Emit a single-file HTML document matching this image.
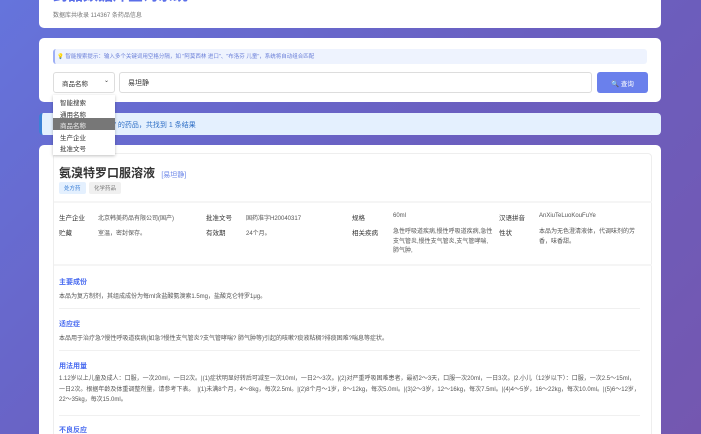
<!DOCTYPE html><html style="width:701px;height:434px;overflow:hidden"><head><meta charset="utf-8"><style>
*{box-sizing:border-box;margin:0;padding:0}
html,body{width:701px;height:434px;overflow:hidden}
body{font-family:"Liberation Sans","Noto Sans CJK SC",sans-serif;background:linear-gradient(135deg,#6574dc 0%,#6a5fc0 50%,#7457b0 100%);position:relative;color:#333}
.card{position:absolute;left:39px;width:622px;background:#fff;border-radius:5px}
.abs{position:absolute;white-space:nowrap}
.s{font-size:6px;color:#555}
.lab{font-size:6.5px;color:#333}
.h{font-size:7px;color:#4a6cf0;font-weight:bold}
.hr{position:absolute;left:59px;width:581px;height:1px;background:#f0f0f0}
</style></head><body>
<div class="card" style="top:-10px;height:38px">
 <div class="abs" style="left:14px;top:0;font-size:15px;font-weight:bold;color:#5a6ee8;line-height:12px">药品数据库查询系统</div>
 <div class="abs s" style="left:14px;top:20px;color:#777">数据库共收录 114367 条药品信息</div>
</div>
<div class="card" style="top:38px;height:64px">
 <div class="abs" style="left:14px;top:11px;width:594px;height:15px;background:#eef3fe;border-left:2px solid #9fb0f5;border-radius:3px"></div>
 <div class="abs" style="left:18px;top:14px;font-size:5.5px;color:#6a7fd8">💡 智能搜索提示：输入多个关键词用空格分隔，如 "阿莫西林 进口"、"布洛芬 儿童"，系统将自动组合匹配</div>
 <div class="abs" style="left:14px;top:34px;width:62px;height:21px;border:1px solid #ddd;border-radius:3px;font-size:6.5px;padding:5px 0 0 8px">商品名称<span style="position:absolute;right:5px;top:4px;font-size:6px">⌄</span></div>
 <div class="abs" style="left:80px;top:34px;width:473px;height:21px;border:1px solid #ddd;border-radius:3px;font-size:7px;padding:5px 0 0 8px">易坦静</div>
 <div class="abs" style="left:558px;top:34px;width:51px;height:21px;background:#6a80ec;border-radius:3px;font-size:6.5px;color:#fff;padding:6px 0 0 14px">🔍 查询</div>
</div>
<div class="abs" style="left:39px;top:113px;width:622px;height:22px;background:#e4f0fe;border-left:3px solid #3b82d6;border-radius:4px;font-size:7px;color:#2f6fc6;padding:7px 0 0 48px">"易坦静" 的药品，共找到 1 条结果</div>
<div class="card" style="top:145px;height:300px">
 <div class="abs" style="left:14px;top:8px;width:599px;height:300px;border:1px solid #eee;border-radius:4px"></div>
</div>
<div class="abs" style="left:59px;top:164px;font-size:12px;font-weight:bold;color:#333">氨溴特罗口服溶液 <span style="font-size:7px;font-weight:normal;color:#6a85e8;margin-left:3px">[易坦静]</span></div>
<div class="abs" style="left:59px;top:182px;font-size:5.5px;background:#e4f0fe;color:#3b7fd6;padding:2px 5px;border-radius:2px">处方药</div>
<div class="abs" style="left:89px;top:182px;font-size:5.5px;background:#f0f0f0;color:#777;padding:2px 5px;border-radius:2px">化学药品</div>
<div class="abs" style="left:54px;top:201px;width:598px;height:2px;background:#f5f5f5"></div>
<div class="abs lab" style="left:59px;top:212px">生产企业</div><div class="abs s" style="left:98px;top:213px">北京韩美药品有限公司(国产)</div>
<div class="abs lab" style="left:206px;top:212px">批准文号</div><div class="abs s" style="left:246px;top:213px">国药准字H20040317</div>
<div class="abs lab" style="left:352px;top:212px">规格</div><div class="abs s" style="left:393px;top:213px">60ml</div>
<div class="abs lab" style="left:499px;top:212px">汉语拼音</div><div class="abs s" style="left:539px;top:213px">AnXiuTeLuoKouFuYe</div>
<div class="abs lab" style="left:59px;top:227px">贮藏</div><div class="abs s" style="left:98px;top:228px">室温，密封保存。</div>
<div class="abs lab" style="left:206px;top:227px">有效期</div><div class="abs s" style="left:246px;top:228px">24个月。</div>
<div class="abs lab" style="left:352px;top:227px">相关疾病</div><div class="abs s" style="left:393px;top:228px;white-space:normal;width:100px;line-height:9.5px">急性呼吸道疾病,慢性呼吸道疾病,急性支气管炎,慢性支气管炎,支气管哮喘,肺气肿,</div>
<div class="abs lab" style="left:499px;top:227px">性状</div><div class="abs s" style="left:539px;top:228px;white-space:normal;width:100px;line-height:9.5px">本品为无色澄清液体，代调味剂的芳香，味香甜。</div>
<div class="abs" style="left:54px;top:264px;width:598px;height:2px;background:#f5f5f5"></div>
<div class="abs h" style="left:59px;top:277px">主要成份</div>
<div class="abs s" style="left:59px;top:291px">本品为复方制剂，其组成成份为每ml含盐酸氨溴索1.5mg，盐酸克仑特罗1μg。</div>
<div class="hr" style="top:308px"></div>
<div class="abs h" style="left:59px;top:319px">适应症</div>
<div class="abs s" style="left:59px;top:333px">本品用于治疗急?慢性呼吸道疾病(如急?慢性支气管炎?支气管哮喘? 肺气肿等)引起的咳嗽?痰液粘稠?排痰困难?喘息等症状。</div>
<div class="hr" style="top:350px"></div>
<div class="abs h" style="left:59px;top:361px">用法用量</div>
<div class="abs s" style="left:59px;top:374px;white-space:normal;width:582px;line-height:10.5px">1.12岁以上儿童及成人：口服，一次20ml，一日2次。|(1)症状明显好转后可减至一次10ml，一日2～3次。|(2)对严重呼吸困难患者，最初2～3天，口服一次20ml，一日3次。|2.小儿（12岁以下）：口服，一次2.5～15ml，一日2次。根据年龄及体重调整剂量，请参考下表。　|(1)未满8个月，4～8kg，每次2.5ml。|(2)8个月～1岁，8～12kg，每次5.0ml。|(3)2～3岁，12～16kg，每次7.5ml。|(4)4～5岁，16～22kg，每次10.0ml。|(5)6～12岁，22～35kg，每次15.0ml。</div>
<div class="hr" style="top:415px"></div>
<div class="abs h" style="left:59px;top:425px">不良反应</div>
<div class="abs" style="left:53px;top:95px;width:62px;height:60px;background:#fff;box-shadow:0 1px 3px rgba(0,0,0,.25);font-size:6.5px;color:#333">
 <div style="padding:2px 7px;height:11.5px">智能搜索</div>
 <div style="padding:2px 7px;height:11.5px">通用名称</div>
 <div style="padding:2px 7px;height:11.5px;background:#777;color:#eee">商品名称</div>
 <div style="padding:2px 7px;height:11.5px">生产企业</div>
 <div style="padding:2px 7px;height:11.5px">批准文号</div>
</div>
</body></html>
